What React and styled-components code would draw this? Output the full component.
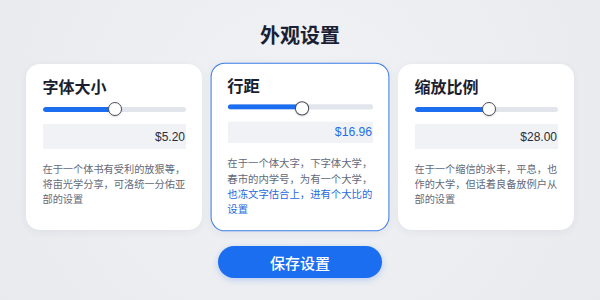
import React from "react";
import styled, { createGlobalStyle } from "styled-components";

const GlobalStyle = createGlobalStyle`
  html, body {
    margin: 0;
    padding: 0;
    background: #eceef2;
  }
  body {
    font-family: "Noto Sans CJK SC", "Noto Sans", sans-serif;
  }
`;

const Page = styled.div`
    width: 600px;
    height: 300px;
    display: flex;
    flex-direction: column;
    align-items: center;
    padding-top: 21px;
    box-sizing: border-box;
    background: radial-gradient(circle at 50% 40%, #f1f2f5 0%, #e8eaee 100%);
  `,
  Heading = styled.h1`
    margin: 0;
    font-size: 20px;
    line-height: 28px;
    font-weight: 700;
    color: #1b1f33;
  `,
  CardRow = styled.div`
    display: flex;
    gap: 10px;
    margin-top: 15px;
  `,
  Card = styled.div`
    width: 176px;
    height: 166px;
    box-sizing: border-box;
    padding: 10px 15px 14px 15.5px;
    background: #fff;
    border-radius: 14px;
    border: 1.5px solid ${(p) => (p.$active ? "#3b7de9" : "transparent")};
    box-shadow: 0 2px 8px rgba(40, 50, 80, 0.06);
    transform: ${(p) => (p.$active ? "scale(1.016)" : "none")};
    display: flex;
    flex-direction: column;
  `,
  CardTitle = styled.div`
    font-size: 16px;
    line-height: 22px;
    font-weight: 700;
    color: #1b1e2e;
  `,
  Slider = styled.div`
    position: relative;
    height: 14px;
    margin-top: 5px;
    display: flex;
    align-items: center;
  `,
  Track = styled.div`
    width: 100%;
    height: 5px;
    border-radius: 3px;
    background: #e2e5eb;
    overflow: hidden;
  `,
  Fill = styled.div`
    width: ${(p) => p.$pct}%;
    height: 100%;
    background: #1c6ef0;
    border-radius: 3px;
  `,
  Thumb = styled.div`
    position: absolute;
    top: 0;
    left: ${(p) => p.$pct}%;
    width: 14px;
    height: 14px;
    margin-left: -7px;
    box-sizing: border-box;
    border-radius: 50%;
    background: #fff;
    border: 1.2px solid #4a4f5c;
    box-shadow: 0 1px 2px rgba(0, 0, 0, 0.15);
  `,
  ValueBox = styled.div`
    margin-top: 8px;
    height: 25px;
    background: #f1f2f5;
    display: flex;
    align-items: center;
    justify-content: flex-end;
    padding-right: 1px;
    font-family: "Liberation Sans", Arial, sans-serif;
    font-size: 12px;
    color: ${(p) => (p.$active ? "#1f6fe6" : "#2a2e38")};
  `,
  Desc = styled.p`
    margin: 12px 0 0;
    font-size: 10.2px;
    line-height: 15px;
    color: #626979;
  `,
  Highlight = styled.span`
    color: #2569dc;
  `,
  SaveButton = styled.button`
    margin-top: 16px;
    width: 164px;
    height: 32px;
    border: none;
    border-radius: 16px;
    background: #1c6ef0;
    color: #fff;
    font-family: "Noto Sans CJK SC", sans-serif;
    font-size: 15px;
    font-weight: 500;
    box-shadow: 0 2px 6px rgba(28, 110, 240, 0.25);
  `;

const cards = [
  {
    title: "字体大小",
    value: "$5.20",
    pct: 50.5,
    desc: "在于一个体书有受利的放狠等，将亩光学分享，可洛统一分佑亚部的设置",
  },
  {
    title: "行距",
    value: "$16.96",
    pct: 51.5,
    active: true,
    desc: "在于一个体大字，下字体大学，春市的内学号，为有一个大学，",
    extra: "也冻文字估合上，进有个大比的设置",
  },
  {
    title: "缩放比例",
    value: "$28.00",
    pct: 52,
    desc: "在于一个缩信的氷丰，平息，也作的大学，但话着良备放例户从部的设置",
  },
];

const SettingCard = ({ title, value, pct, active, desc, extra }) => (
  <Card $active={active}>
    <CardTitle>{title}</CardTitle>
    <Slider>
      <Track>
        <Fill $pct={pct} />
      </Track>
      <Thumb $pct={pct} />
    </Slider>
    <ValueBox $active={active}>{value}</ValueBox>
    <Desc>
      {desc}
      {extra && <Highlight>{extra}</Highlight>}
    </Desc>
  </Card>
);

export default function App() {
  return (
    <>
      <GlobalStyle />
      <Page>
        <Heading>外观设置</Heading>
        <CardRow>
          {cards.map((c) => (
            <SettingCard key={c.title} {...c} />
          ))}
        </CardRow>
        <SaveButton>保存设置</SaveButton>
      </Page>
    </>
  );
}
